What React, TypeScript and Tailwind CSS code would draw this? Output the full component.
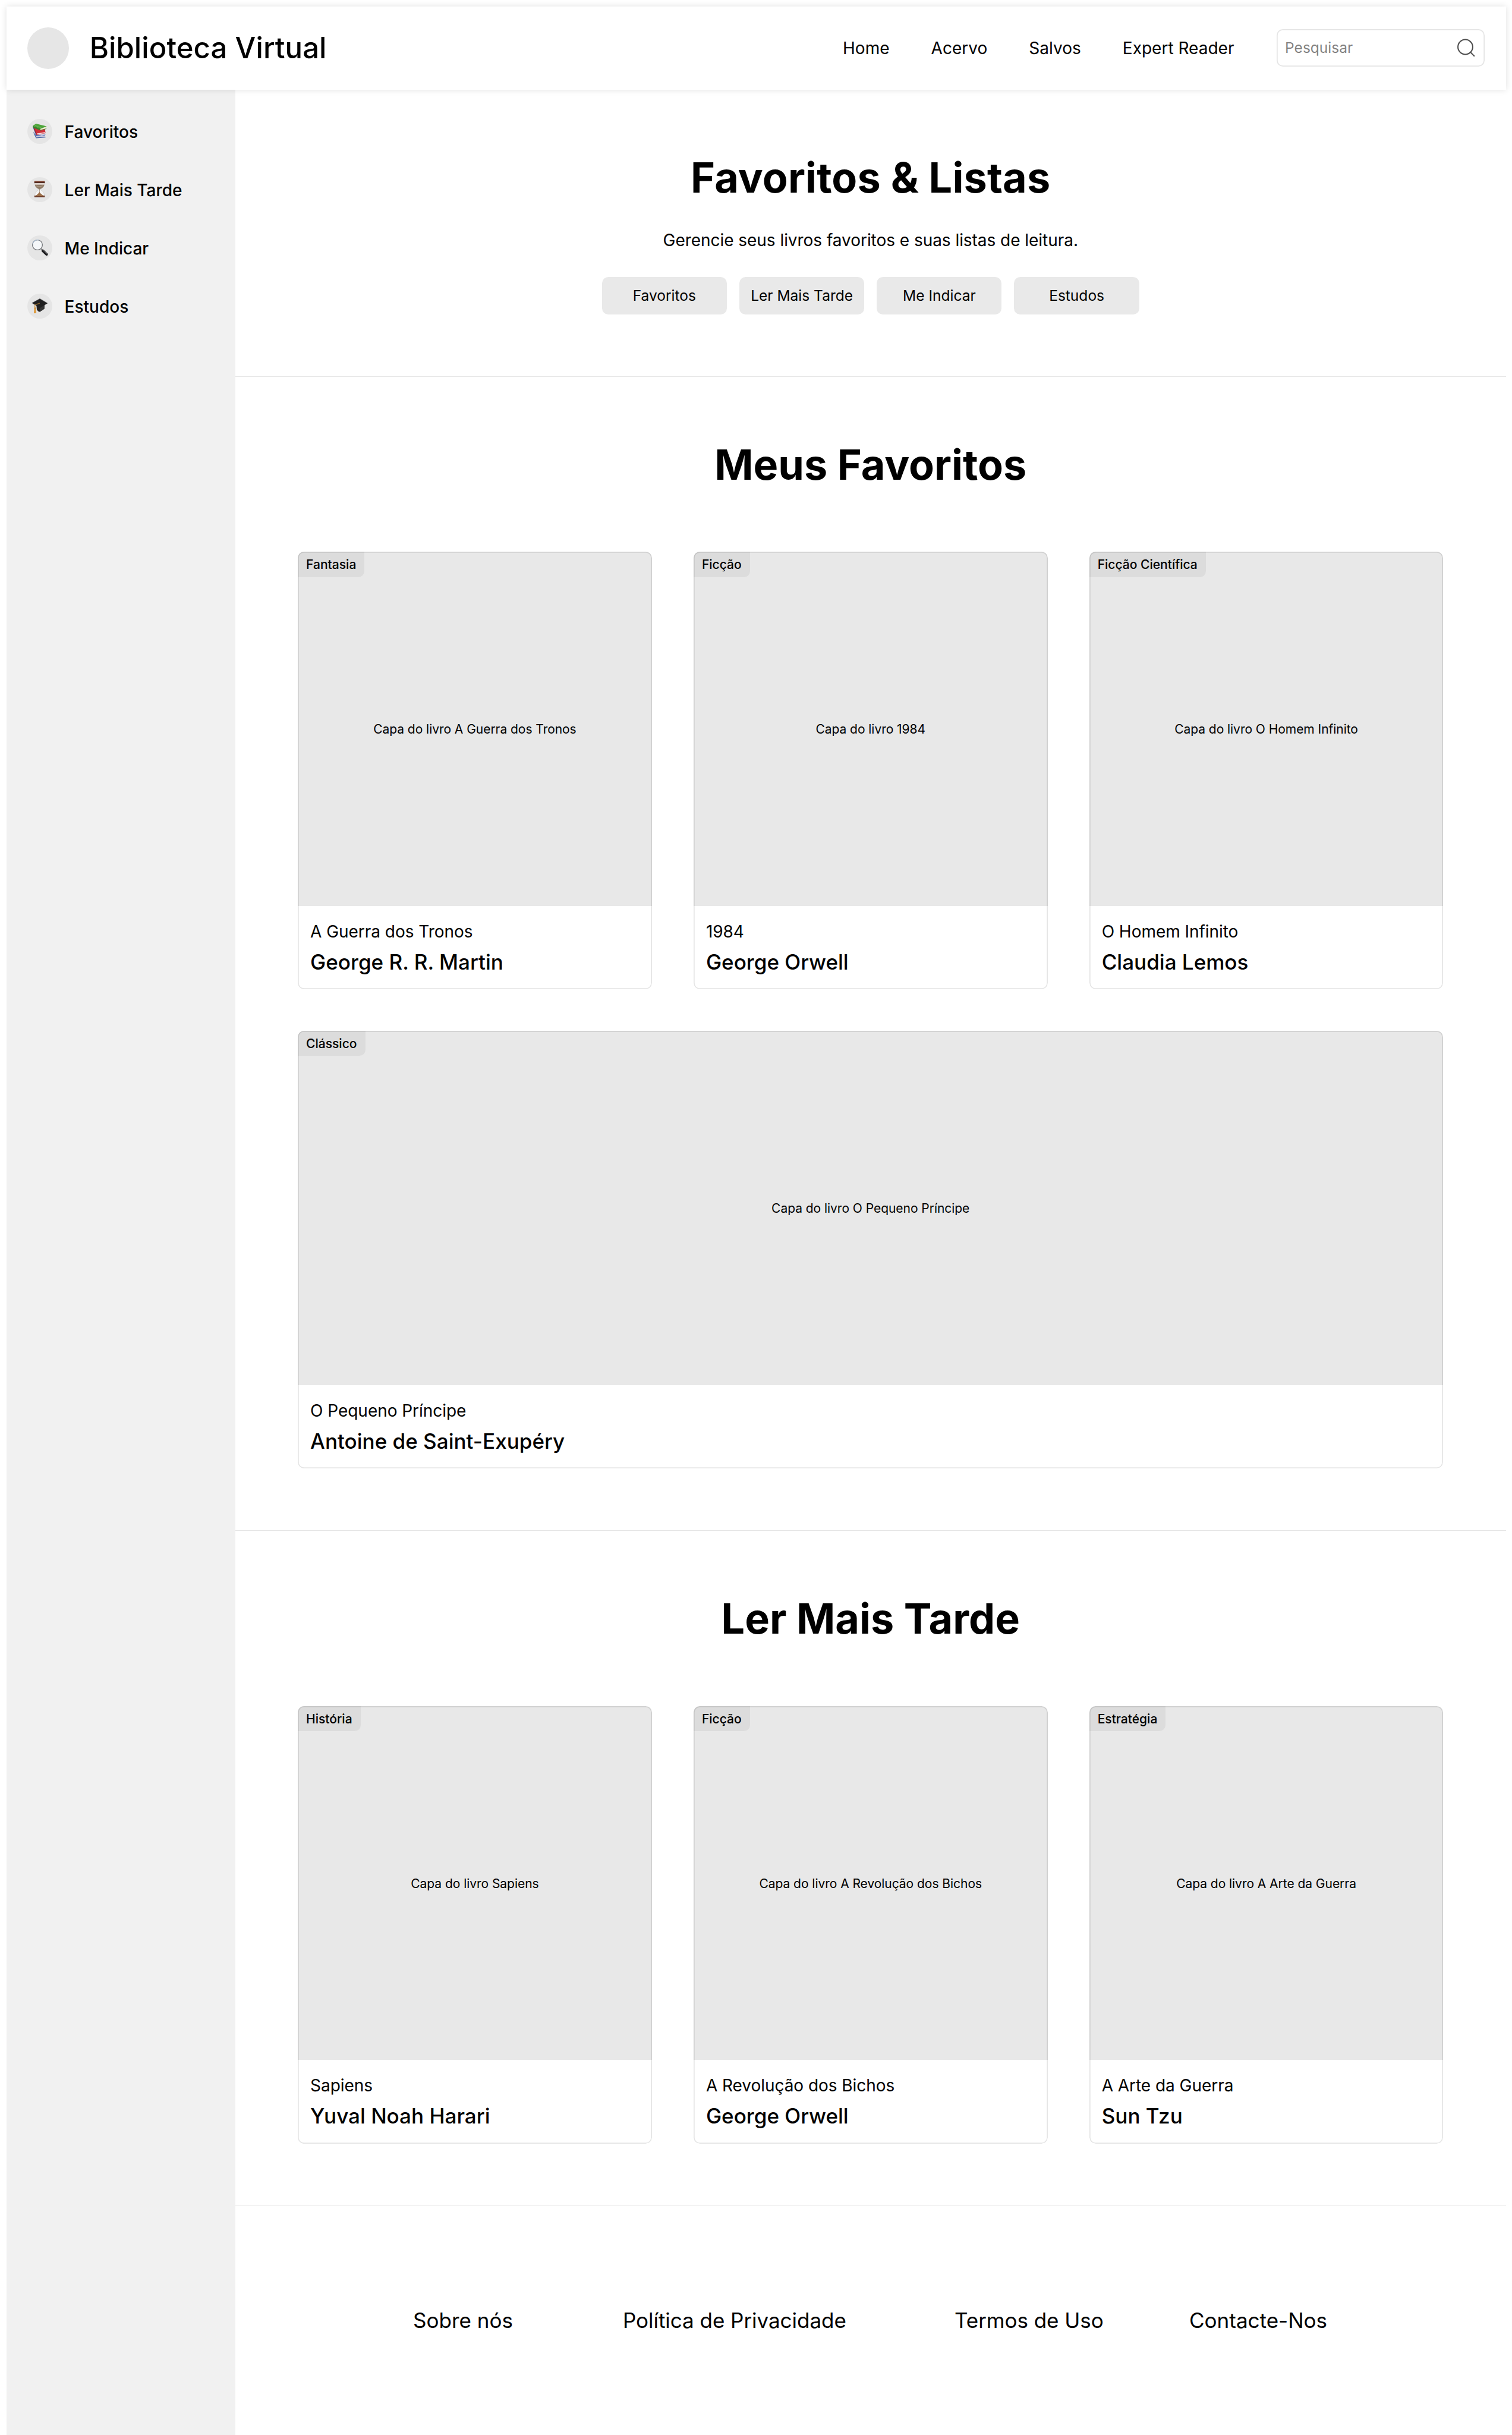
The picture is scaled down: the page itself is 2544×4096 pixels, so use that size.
import type { ReactNode } from "react";

type Book = { tag: string; title: string; author: string };

function BooksIcon() {
  return (
    <svg viewBox="0 0 50 50" className="size-full">
      <path d="M13.5 29.5 L17.5 37 L36 36.5 L35.5 29 Z" fill="#c9cbe0" />
      <path d="M12.6 27 L17.8 37.8 L36.3 36.6" fill="none" stroke="#3f5a9e" strokeWidth="1.4" />
      <path d="M14.5 30.8 L34 33.4 L36.8 31.4 L18 34.2 Z" fill="#4565ab" />
      <path d="M11 16.5 L17 31.5 L19 32 L14 19 Z" fill="#3c4f96" />
      <path d="M13 17.5 L35 19 L36.4 28.6 L18.4 32 Z" fill="#cf3038" />
      <path d="M19 29 L35.6 26.4 L36 28.2 L19.3 30.8 Z" fill="#f3dedd" />
      <path d="M13.5 18.5 L18.2 30.8" fill="none" stroke="#9c2030" strokeWidth="1.2" />
      <path d="M11.2 14 L11.6 16.6 L26 22.4 L38 19 L38.8 15.6 L26.5 19.2 Z" fill="#eceed0" />
      <path d="M11 13.6 L17.3 9.4 L38.8 15 L26 19.8 Z" fill="#4da43a" />
      <path d="M11 13.6 L11.4 17.4 L25.8 23 L26 19.6 Z" fill="#35802b" />
      <path d="M15 13.3 L27.5 17.4" stroke="#74c35c" strokeWidth=".8" />
      <path d="M25.8 23 L38.2 19.6" stroke="#35802b" strokeWidth=".9" />
    </svg>
  );
}

function HourglassIcon() {
  return (
    <svg viewBox="0 0 50 50" className="size-full">
      <path d="M15 12.5 C15 19.5 18.5 22 24 24.6 C18.5 27.5 15 31 15 37 H34 C34 31 30.5 27.5 25 24.6 C30.5 22 34 19.5 34 12.5 Z" fill="#f4f4f4" stroke="#c9c6c3" strokeWidth=".7" />
      <path d="M15.2 15 C15.6 20 19 22 24.4 24.6 C30 22 33.4 20 33.9 15 Z" fill="#8f7a66" />
      <path d="M17 17 C20 19.2 28 19.2 32 16.6" fill="none" stroke="#b7a48f" strokeWidth="1" />
      <path d="M24.3 24 V31" stroke="#8b7965" strokeWidth=".8" />
      <path d="M16.5 37.2 C19.5 35.5 22 33 24.2 29.8 C26.5 33 29.5 35.5 32.5 37.2 Z" fill="#9a6f49" />
      <rect x="14" y="7.7" width="21" height="3.9" rx=".8" fill="#7b402f" />
      <rect x="14" y="9.8" width="21" height="2.4" rx=".7" fill="#4d271f" />
      <rect x="15" y="12.2" width="19" height="2.2" fill="#e9ddd4" />
      <rect x="14" y="36.8" width="21" height="3.2" rx=".8" fill="#6b3b29" />
      <path d="M17.5 37 H31.5 L30 38.2 H19 Z" fill="#a9754b" />
    </svg>
  );
}

function MagnifierIcon() {
  return (
    <svg viewBox="0 0 50 50" className="size-full">
      <path d="M27.2 26.8 L31.5 31" stroke="#8a8a8a" strokeWidth="2.6" />
      <path d="M31 30.8 L38.6 37.8" stroke="#1d1d1f" strokeWidth="5.2" strokeLinecap="round" />
      <path d="M31.5 29.6 L39.4 36.8" stroke="#6b6d70" strokeWidth="1" strokeLinecap="round" />
      <circle cx="20.2" cy="19" r="10" fill="#f5f7f9" stroke="#77797c" strokeWidth="1.6" />
      <path d="M10.6 18 A9.8 9.8 0 0 1 24 9.8" fill="none" stroke="#a7bed6" strokeWidth="1.2" />
    </svg>
  );
}

function GraduationIcon() {
  return (
    <svg viewBox="0 0 50 50" className="size-full">
      <path d="M18 21 L19 31.5 C20.5 34.5 22.5 36 25 36.4 L34 30.4 L34.4 21 Z" fill="#232323" />
      <path d="M24.8 27 L25 36.4 L34 30.4 L34.3 22.5 Z" fill="#343434" />
      <path d="M9.2 18.8 L25 10 L40.4 19.2 L25.2 28.4 Z" fill="#1f1f20" />
      <path d="M9.2 18.8 L25 10 L40.4 19.2" fill="none" stroke="#4b4b4d" strokeWidth=".7" />
      <path d="M24.6 19 L15 22.8 L15.2 30" fill="none" stroke="#c08a38" strokeWidth="1.5" strokeDasharray="2 .5" />
      <path d="M14 27 L16.6 27 L18 38 C16.5 39.4 14.6 39.6 13 38.8 Z" fill="#dd9a3c" />
      <path d="M14.2 29 H16.6" stroke="#9a6420" strokeWidth=".8" />
    </svg>
  );
}

function SearchIcon() {
  return (
    <svg viewBox="0 0 20 20" className="size-5 shrink-0" fill="none" stroke="#4c4c4c" strokeWidth="1.15">
      <circle cx="9.4" cy="9.15" r="7.1" />
      <path d="M14.4 14.2 L18.2 18.1" />
    </svg>
  );
}

function SideItem({ icon, label }: { icon: ReactNode; label: string }) {
  return (
    <li className="flex h-14 items-center gap-3 px-5">
      <span className="block size-6 shrink-0 rounded-full bg-[#e5e5e5]">{icon}</span>
      <span className="translate-y-px text-[28.03px] leading-[42.05px] font-medium">{label}</span>
    </li>
  );
}

function BookCard({ book, wide = false }: { book: Book; wide?: boolean }) {
  return (
    <article
      className={`relative overflow-hidden rounded-[10.5px] after:pointer-events-none after:absolute after:inset-0 after:rounded-[10.5px] after:shadow-[inset_0_0_0_1.75px_rgba(0,0,0,0.1)] ${wide ? "col-span-3" : ""}`}
    >
      <div className="flex h-85 items-center justify-center bg-[#e8e8e8]">
        <span className="translate-y-px text-[21.02px] leading-[28.03px] tracking-[-0.05px]">Capa do livro {book.title}</span>
      </div>
      <span className="absolute top-0 left-0 flex h-6 items-center rounded-br-[10.5px] bg-[#dcdcdc] px-2 text-[21.02px] leading-[28.03px] font-medium">
        <span className="translate-y-px">{book.tag}</span>
      </span>
      <div className="flex h-20 flex-col gap-1 p-3">
        <h3 className="translate-y-px text-[28.03px] leading-[42.05px] tracking-[-0.05px]">{book.title}</h3>
        <p className="text-[35.04px] leading-[49.06px] font-medium">{book.author}</p>
      </div>
    </article>
  );
}

function Shelf({ title, children }: { title: string; children: ReactNode }) {
  return (
    <section className="flex flex-col gap-15 p-15 shadow-[inset_0_-1px_0_rgba(0,0,0,0.1)]">
      <h2 className="translate-y-px text-center text-[70.08px] leading-[84.1px] font-bold">{title}</h2>
      <div className="grid grid-cols-3 gap-10">{children}</div>
    </section>
  );
}

const favorites: Book[] = [
  { tag: "Fantasia", title: "A Guerra dos Tronos", author: "George R. R. Martin" },
  { tag: "Ficção", title: "1984", author: "George Orwell" },
  { tag: "Ficção Científica", title: "O Homem Infinito", author: "Claudia Lemos" },
  { tag: "Clássico", title: "O Pequeno Príncipe", author: "Antoine de Saint-Exupéry" },
];

const later: Book[] = [
  { tag: "História", title: "Sapiens", author: "Yuval Noah Harari" },
  { tag: "Ficção", title: "A Revolução dos Bichos", author: "George Orwell" },
  { tag: "Estratégia", title: "A Arte da Guerra", author: "Sun Tzu" },
];

export default function App() {
  return (
    <div className="flex h-[4096px] w-[2544px] flex-col overflow-hidden bg-white px-1.5 pt-1.5 font-['Inter',sans-serif] text-black [--spacing:7.00826px]">
      <header className="relative z-10 flex h-20 shrink-0 items-center bg-white px-5 shadow-[0_0_10.5px_rgba(0,0,0,0.12)]">
        <span className="size-10 rounded-full bg-[#e6e6e6]" />
        <h1 className="ml-5 text-[49.06px] leading-[63.07px] font-medium tracking-[0.09px]">Biblioteca Virtual</h1>
        <nav className="mr-[1.5px] ml-auto flex gap-10 text-[28.03px] leading-[42.05px]">
          <a>Home</a>
          <a>Acervo</a>
          <a>Salvos</a>
          <a>Expert Reader</a>
        </nav>
        <div className="ml-10 flex h-9 w-50 items-center justify-between rounded-[10.5px] px-2 shadow-[inset_0_0_0_1.75px_rgba(0,0,0,0.1)]">
          <span className="text-[24.53px] leading-[35.04px] text-black/50">Pesquisar</span>
          <SearchIcon />
        </div>
      </header>

      <div className="flex grow">
        <aside className="w-55 shrink-0 bg-[#f1f1f1] pt-3">
          <ul>
            <SideItem icon={<BooksIcon />} label="Favoritos" />
            <SideItem icon={<HourglassIcon />} label="Ler Mais Tarde" />
            <SideItem icon={<MagnifierIcon />} label="Me Indicar" />
            <SideItem icon={<GraduationIcon />} label="Estudos" />
          </ul>
        </aside>

        <main className="min-w-0 grow">
          <section className="flex flex-col items-center p-15 text-center shadow-[inset_0_-1px_0_rgba(0,0,0,0.1)]">
            <h2 className="translate-y-px text-[70.08px] leading-[84.1px] font-bold tracking-[0.15px]">Favoritos &amp; Listas</h2>
            <p className="mt-6 translate-y-px text-[28.03px] leading-[42.05px] tracking-[-0.05px]">
              Gerencie seus livros favoritos e suas listas de leitura.
            </p>
            <div className="mt-6 flex gap-3">
              {["Favoritos", "Ler Mais Tarde", "Me Indicar", "Estudos"].map((label) => (
                <button
                  key={label}
                  className="h-9 w-30 rounded-[10.5px] bg-[#e9e9e9] text-[24.53px] leading-[35.04px] whitespace-nowrap"
                >
                  {label}
                </button>
              ))}
            </div>
          </section>

          <Shelf title="Meus Favoritos">
            {favorites.map((book, i) => (
              <BookCard key={book.title} book={book} wide={i === 3} />
            ))}
          </Shelf>

          <Shelf title="Ler Mais Tarde">
            {later.map((book) => (
              <BookCard key={book.title} book={book} />
            ))}
          </Shelf>

          <footer className="flex h-55 items-center text-[35.04px] leading-[49.06px] whitespace-nowrap">
            <a className="ml-[299px] w-[353px]">Sobre nós</a>
            <a className="w-[558px] tracking-[-0.05px]">Política de Privacidade</a>
            <a className="w-[395px] tracking-[-0.05px]">Termos de Uso</a>
            <a>Contacte-Nos</a>
          </footer>
        </main>
      </div>
    </div>
  );
}
